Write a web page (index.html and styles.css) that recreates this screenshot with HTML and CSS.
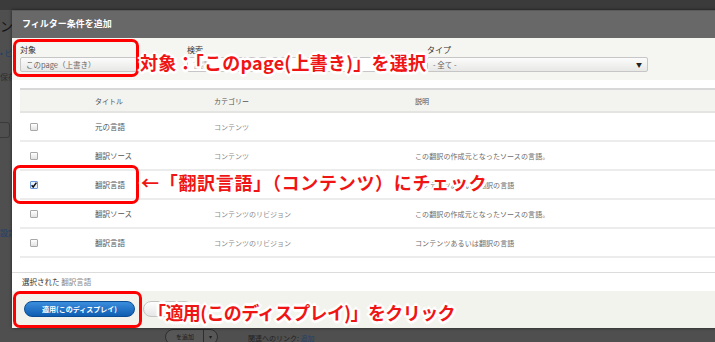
FILE: index.html
```html
<!DOCTYPE html>
<html lang="ja">
<head>
<meta charset="utf-8">
<title>フィルター条件を追加</title>
<link rel="stylesheet" href="styles.css">
</head>
<body>
<div class="screen">
  <div class="page">
    <div class="page-toolbar"></div>
    <div class="page-body">
      <div class="page-title">ンツ</div>
      <div class="page-link">• ビュー</div>
      <div class="page-muted">保存</div>
      <div class="page-box"></div>
      <div class="page-link2">設定</div>
      <div class="page-bottom">
        <span class="pill"><span class="pill-main">を追加</span><span class="pill-drop">▾</span></span>
        <span class="page-rel">関連へのリンク: <span class="page-rel-link">追加</span></span>
      </div>
    </div>
  </div>

  <div class="modal">
    <div class="titlebar">フィルター条件を追加</div>
    <div class="filters">
      <div class="field f-target">
        <div class="lbl">対象</div>
        <div class="select">このpage（上書き）</div>
      </div>
      <div class="field f-search">
        <div class="lbl">検索</div>
        <div class="input">言語</div>
      </div>
      <div class="field f-type">
        <div class="lbl">タイプ</div>
        <div class="select"><span>- 全て -</span><span class="arrow">▼</span></div>
      </div>
    </div>
    <div class="results">
      <div class="tbl">
        <div class="tr th">
          <div></div><div>タイトル</div><div>カテゴリー</div><div>説明</div>
        </div>
        <div class="tr">
          <div><span class="cb"></span></div><div class="c-title">元の言語</div><div class="c-cat">コンテンツ</div><div class="c-desc"></div>
        </div>
        <div class="tr">
          <div><span class="cb"></span></div><div class="c-title">翻訳ソース</div><div class="c-cat">コンテンツ</div><div class="c-desc">この翻訳の作成元となったソースの言語。</div>
        </div>
        <div class="tr">
          <div><span class="cb cb-on"><svg viewBox="0 0 8 8" width="8" height="8"><path d="M1.6 4.2 L3.2 6 L6.4 1.6" fill="none" stroke="#111" stroke-width="1.5"/></svg></span></div><div class="c-title">翻訳言語</div><div class="c-cat">コンテンツ</div><div class="c-desc">コンテンツあるいは翻訳の言語</div>
        </div>
        <div class="tr">
          <div><span class="cb"></span></div><div class="c-title">翻訳ソース</div><div class="c-cat">コンテンツのリビジョン</div><div class="c-desc">この翻訳の作成元となったソースの言語。</div>
        </div>
        <div class="tr">
          <div><span class="cb"></span></div><div class="c-title">翻訳言語</div><div class="c-cat">コンテンツのリビジョン</div><div class="c-desc">コンテンツあるいは翻訳の言語</div>
        </div>
      </div>
    </div>
    <div class="selected">選択された <span class="sel-val">翻訳言語</span></div>
    <div class="footer">
      <button class="btn-primary">適用(このディスプレイ)</button>
      <button class="btn-secondary"></button>
    </div>
  </div>

  <div class="hl hl-1"></div>
  <div class="hl hl-2"></div>
  <div class="hl hl-3"></div>
  <div class="note note-1">対象：「このpage(上書き)」を選択</div>
  <div class="note note-2">←「翻訳言語」（コンテンツ）にチェック</div>
  <div class="note note-3">「適用(このディスプレイ)」をクリック</div>
</div>
</body>
</html>
```

FILE: styles.css
```css
html, body {
  margin: 0;
  padding: 0;
}
body {
  width: 715px;
  height: 342px;
  overflow: hidden;
  background: #4e4e4e;
  font-family: "Noto Sans CJK JP", "Noto Sans", sans-serif;
}
.screen {
  position: relative;
  width: 715px;
  height: 342px;
  overflow: hidden;
}

/* underlying dimmed page */
.page-toolbar {
  height: 10px;
  background: #3b3b3b;
}
.page-body {
  display: flex;
  flex-direction: column;
  background: #4f4f4f;
  height: 332px;
}
.page-title {
  margin: 8px 0 0 0;
  font-size: 13px;
  line-height: 16px;
  color: #141414;
}
.page-link {
  margin-top: 14px;
  font-size: 8px;
  line-height: 10px;
  color: #23406a;
}
.page-muted {
  margin-top: 14px;
  font-size: 8px;
  line-height: 10px;
  color: #2e2e2e;
}
.page-box {
  margin: 40px 0 0 -4px;
  width: 12px;
  height: 14px;
  border: 1px solid #3a3a3a;
  border-radius: 3px;
}
.page-link2 {
  margin-top: 90px;
  font-size: 8px;
  line-height: 10px;
  color: #23406a;
}
.page-bottom {
  margin-top: auto;
  height: 13px;
  display: flex;
  align-items: flex-start;
  padding-left: 165px;
  gap: 30px;
}
.pill {
  display: flex;
  height: 14px;
  border: 1px solid #2e2e2e;
  border-radius: 8px;
  background: #575757;
  font-size: 6px;
  line-height: 14px;
  color: #1c1c1c;
}
.pill-main {
  padding: 0 9px 0 10px;
  border-right: 1px solid #2e2e2e;
}
.pill-drop {
  padding: 0 5px;
}
.page-rel {
  padding-top: 4px;
  font-size: 7px;
  color: #222;
}
.page-rel-link {
  color: #23406a;
}

/* modal */
.modal {
  position: absolute;
  left: 12px;
  top: 10px;
  width: 712px;
  box-shadow: 0 0 3px rgba(0, 0, 0, 0.6);
}
.titlebar {
  height: 28px;
  box-sizing: border-box;
  background: #686868;
  border-top: 1px solid #5a5a5a;
  color: #fff;
  font-size: 9px;
  font-weight: bold;
  line-height: 26px;
  padding-left: 10px;
}
.filters {
  height: 42px;
  box-sizing: border-box;
  background: #f5f5f1;
  display: flex;
  padding: 6px 0 0 8px;
}
.lbl {
  height: 11px;
  font-size: 8px;
  line-height: 11px;
  color: #333;
}
.f-target {
  width: 117px;
  margin-right: 50px;
}
.f-search {
  width: 190px;
  margin-right: 50px;
}
.f-type {
  width: 221px;
}
.select,
.input {
  margin-top: 2px;
  height: 15px;
  box-sizing: border-box;
  border: 1px solid #c6c6c6;
  border-radius: 2px;
  font-size: 7.5px;
  line-height: 13px;
  padding: 0 5px 0 5px;
  color: #666;
}
.select {
  display: flex;
  justify-content: space-between;
  background: linear-gradient(#fbfbfb, #e8e8e6);
}
.input {
  background: #fff;
  color: #aaa;
}
.arrow {
  font-size: 6px;
  color: #222;
}

.results {
  background: #fff;
  padding: 8px 0 14px 8px;
  border-bottom: 1px solid #dcdcdc;
}
.tbl {
  width: 704px;
  border-top: 2px solid #d8d8d8;
}
.tr {
  display: grid;
  grid-template-columns: 75px 119px 201px 1fr;
  align-items: center;
  height: 29px;
  box-sizing: border-box;
  border-bottom: 2px solid #ececec;
  font-size: 7px;
}
.tr.th {
  height: 23px;
  background: #f3f3ef;
  border-bottom-color: #e4e4e2;
  color: #555;
}
.c-title {
  color: #555;
  font-size: 7.5px;
}
.c-cat {
  color: #8c8c8c;
}
.c-desc {
  color: #6c6c6c;
  letter-spacing: 0.1px;
}
.cb {
  display: block;
  width: 8px;
  height: 8px;
  margin-left: 10px;
  box-sizing: border-box;
  border: 1px solid #a8a8a8;
  border-radius: 1px;
  background: linear-gradient(#ffffff, #e2e2e2);
}
.cb-on {
  border-color: #6f98d8;
  background: #e8f0fc;
}
.cb-on svg {
  display: block;
  margin: -1px 0 0 -1px;
}

.selected {
  height: 18px;
  background: #fff;
  font-size: 7.5px;
  line-height: 18px;
  padding-left: 10px;
  color: #333;
}
.sel-val {
  color: #888;
}
.footer {
  height: 37px;
  box-sizing: border-box;
  background: #f3f3ee;
  padding: 10px 0 0 12px;
  display: flex;
  align-items: flex-start;
  gap: 8px;
}
.btn-primary {
  width: 111px;
  height: 16px;
  padding: 0;
  border: 1px solid #0b4d92;
  border-radius: 8px;
  background: linear-gradient(#3b8ddd, #0e5db2);
  color: #fff;
  font-family: inherit;
  font-size: 7px;
  font-weight: bold;
  line-height: 14px;
}
.btn-secondary {
  width: 50px;
  height: 16px;
  padding: 0;
  border: 1px solid #c4c4c4;
  border-radius: 8px;
  background: linear-gradient(#fdfdfd, #e6e6e6);
}

/* annotations */
.hl {
  position: absolute;
  box-sizing: border-box;
  border: 3px solid #ff0000;
  border-radius: 7px;
}
.hl-1 { left: 13px; top: 39px; width: 126px; height: 38px; }
.hl-2 { left: 13px; top: 165px; width: 126px; height: 39px; }
.hl-3 { left: 13px; top: 291px; width: 129px; height: 37px; }

.note {
  position: absolute;
  white-space: nowrap;
  color: #f01515;
  font-weight: bold;
  font-size: 18px;
  line-height: 20px;
  text-shadow:
    2px 0 0 #fff, -2px 0 0 #fff, 0 2px 0 #fff, 0 -2px 0 #fff,
    1.5px 1.5px 0 #fff, -1.5px -1.5px 0 #fff, 1.5px -1.5px 0 #fff, -1.5px 1.5px 0 #fff,
    3px 0 1px #fff, -3px 0 1px #fff, 0 3px 1px #fff, 0 -3px 1px #fff;
}
.note-1 { left: 140px; top: 52px; letter-spacing: 0.25px; }
.note-2 { left: 141px; top: 172px; letter-spacing: 0.7px; }
.note-3 { left: 148px; top: 302px; letter-spacing: -0.6px; }
```
